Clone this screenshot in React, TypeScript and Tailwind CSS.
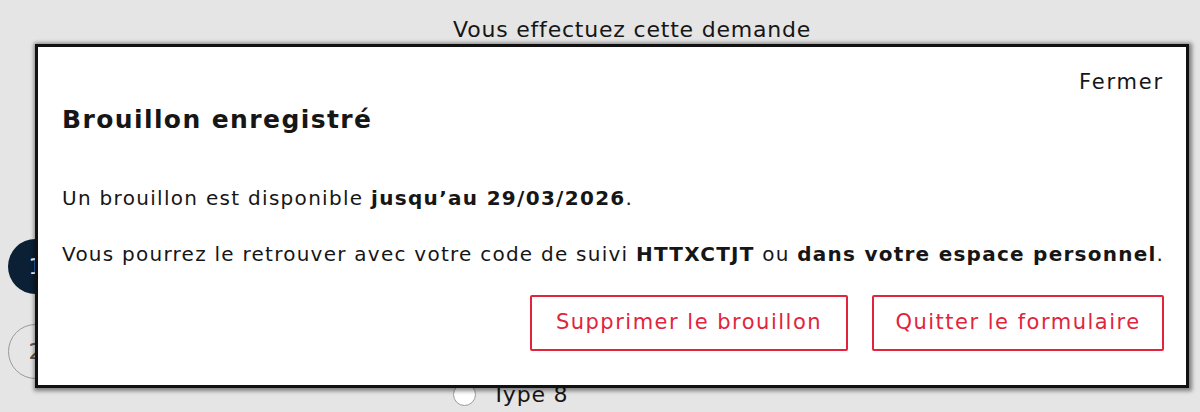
export default function App() {
  return (
    <div className="relative h-[412px] w-[1200px] overflow-hidden bg-[#e5e5e5] font-['DejaVu_Sans',sans-serif] text-[#161616]">
      {/* page behind the dialog */}
      <div className="flex gap-[60px] pl-[8px] pt-[14px]">
        <div className="flex w-[385px] flex-col">
          <div className="pl-[140px] pt-[23px] text-[24px] font-bold leading-[36px] tracking-[1px]">Votre demande</div>
          <div className="mt-[166px] flex flex-col gap-[30px]">
            <div className="flex h-[55px] w-[55px] items-center justify-center rounded-full bg-[#0b2035] text-[22px] text-white">1</div>
            <div className="flex h-[55px] w-[55px] items-center justify-center rounded-full border border-[#9a9a9a] text-[22px] text-[#555]">2</div>
          </div>
        </div>
        <div className="flex flex-col">
          <div className="text-[22px] leading-[32px] tracking-[0.8px]">Vous effectuez cette demande</div>
          <div className="mt-[332px] flex items-center gap-[16px]">
            <span className="h-[23px] w-[23px] rounded-full border border-[#9a9a9a] bg-white" />
            <span className="text-[22px] tracking-[0.8px]">Type 8</span>
          </div>
        </div>
      </div>

      {/* dialog */}
      <div className="absolute left-[35px] top-[44px] flex h-[344px] w-[1154px] flex-col border-[3px] border-[#111] bg-white pb-[34px] pl-[24px] pr-[22px] pt-[19px] shadow-[1px_1px_4px_2px_rgba(0,0,0,0.45)]">
        <div className="flex justify-end">
          <button className="text-[21px] leading-[32px] tracking-[1.8px] text-[#161616]">Fermer</button>
        </div>
        <h2 className="mt-[4px] text-[25px] font-semibold leading-[36px] tracking-[1.4px]">Brouillon enregistré</h2>
        <p className="mt-[45px] whitespace-nowrap text-[20px] leading-[30px] tracking-[1.3px]">
          Un brouillon est disponible <b>jusqu’au 29/03/2026</b>.
        </p>
        <p className="mt-[26px] whitespace-nowrap text-[20px] leading-[30px] tracking-[1.25px]">
          Vous pourrez le retrouver avec votre code de suivi <b>HTTXCTJT</b> ou <b>dans votre espace personnel</b>.
        </p>
        <div className="mt-auto flex justify-end gap-[24px]">
          <button className="h-[56px] w-[318px] rounded-[2px] border-2 border-[#e1243c] text-[21px] tracking-[1.5px] text-[#e1243c]">
            Supprimer le brouillon
          </button>
          <button className="h-[56px] w-[292px] rounded-[2px] border-2 border-[#e1243c] text-[21px] tracking-[1.5px] text-[#e1243c]">
            Quitter le formulaire
          </button>
        </div>
      </div>
    </div>
  );
}
